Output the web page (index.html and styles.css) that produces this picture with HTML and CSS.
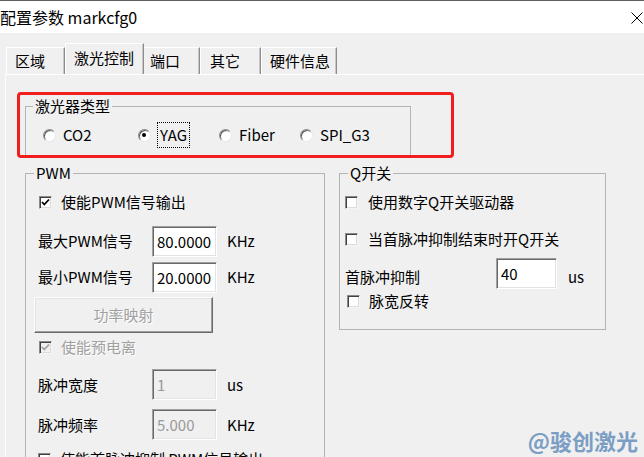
FILE: index.html
```html
<!DOCTYPE html>
<html lang="zh-CN">
<head>
<meta charset="utf-8">
<title>配置参数 markcfg0</title>
<link rel="stylesheet" href="styles.css">
</head>
<body>
<div class="titlebar">
  <span class="title">配置参数 markcfg0</span>
  <svg class="close" width="12" height="12" viewBox="0 0 12 12"><path d="M0.5 0.5 L11.5 11.5 M11.5 0.5 L0.5 11.5" stroke="#000" stroke-width="1" fill="none"/></svg>
</div>
<div class="dialog">
  <div class="tabstrip">
    <div class="tab tab-area">区域</div>
    <div class="tab tab-active">激光控制</div>
    <div class="tab tab-port">端口</div>
    <div class="tab tab-other">其它</div>
    <div class="tab tab-hw">硬件信息</div>
  </div>
  <div class="panel">
    <fieldset class="group group-laser">
      <legend class="legend legend-laser">激光器类型</legend>
      <div class="radios">
        <label class="radio-item radio-co2"><span class="radio"></span><span>CO2</span></label>
        <label class="radio-item"><span class="radio checked"></span><span class="focus">YAG</span></label>
        <label class="radio-item"><span class="radio"></span><span>Fiber</span></label>
        <label class="radio-item"><span class="radio"></span><span>SPI_G3</span></label>
      </div>
    </fieldset>
    <div class="groups">
      <fieldset class="group group-pwm">
        <legend class="legend">PWM</legend>
        <div class="pwm-body">
          <label class="check-row row-first"><span class="cb"><svg width="11" height="11" viewBox="0 0 11 11"><path d="M2 5 L4.3 7.5 L9 2.5" stroke="#000" stroke-width="1.8" fill="none"/></svg></span><span>使能PWM信号输出</span></label>
          <div class="field-row"><span class="flabel">最大PWM信号</span><input class="edit" type="text" value="80.0000"><span class="unit">KHz</span></div>
          <div class="field-row"><span class="flabel">最小PWM信号</span><input class="edit" type="text" value="20.0000"><span class="unit">KHz</span></div>
          <button class="btn" disabled>功率映射</button>
          <label class="check-row row-preion disabled"><span class="cb cb-disabled"><svg width="11" height="11" viewBox="0 0 11 11"><path d="M2 5 L4.3 7.5 L9 2.5" stroke="#a0a0a0" stroke-width="1.8" fill="none"/></svg></span><span class="dis-text">使能预电离</span></label>
          <div class="field-row field-row-31 row-width"><span class="flabel">脉冲宽度</span><input class="edit" type="text" value="1" disabled><span class="unit">us</span></div>
          <div class="field-row field-row-31 row-freq"><span class="flabel">脉冲频率</span><input class="edit" type="text" value="5.000" disabled><span class="unit">KHz</span></div>
          <label class="check-row row-last"><span class="cb"></span><span>使能首脉冲抑制 PWM信号输出</span></label>
        </div>
      </fieldset>
      <fieldset class="group group-q">
        <legend class="legend">Q开关</legend>
        <div class="q-body">
          <label class="check-row q-r1"><span class="cb"></span><span>使用数字Q开关驱动器</span></label>
          <label class="check-row q-r2"><span class="cb"></span><span>当首脉冲抑制结束时开Q开关</span></label>
          <div class="field-row field-row-31 q-r3"><span class="flabel qlabel">首脉冲抑制</span><input class="edit edit-q" type="text" value="40"><span class="unit qunit">us</span></div>
          <label class="check-row q-r4"><span class="cb"></span><span>脉宽反转</span></label>
        </div>
      </fieldset>
    </div>
  </div>
</div>
<div class="annotation"></div>
<div class="watermark">@骏创激光</div>
</body>
</html>
```
FILE: styles.css
```css
* { box-sizing: border-box; }

body {
  margin: 0;
  width: 644px;
  height: 457px;
  overflow: hidden;
  position: relative;
  background: #f0f0f0;
  color: #000;
  font-family: "Noto Sans CJK SC", "Noto Sans", sans-serif;
  font-size: 15px;
  line-height: 18px;
}

.titlebar {
  height: 33px;
  background: #fff;
  border-top: 1px solid #5f5f5f;
  display: flex;
  align-items: center;
  justify-content: space-between;
}

.title {
  font-size: 16px;
  line-height: 20px;
}

.close {
  margin-right: 1px;
  margin-top: 1px;
}

.dialog {
  padding-top: 10px;
}

.tabstrip {
  display: flex;
  align-items: flex-end;
  height: 31px;
  padding-left: 6px;
}

.tab {
  height: 27px;
  display: flex;
  align-items: center;
  padding-left: 8px;
  border-top: 1px solid #fff;
  border-left: 1px solid #fff;
  border-right: 1px solid #8c8c8c;
  box-shadow: inset -1px 0 0 #c8c8c8;
  white-space: nowrap;
}

.tab-area { width: 59px; }
.tab-active { width: 79px; height: 31px; padding-bottom: 2px; }
.tab-port { width: 56px; padding-left: 5px; border-left-color: #f0f0f0; }
.tab-other { width: 61px; padding-left: 9px; }
.tab-hw { width: 76px; }

.panel {
  margin-left: 5px;
  border-top: 1px solid #fff;
  border-left: 1px solid #fff;
  padding: 23px 0 0 19px;
}

.group {
  margin: 0;
  padding: 0;
  border: 1px solid #b4b4b4;
  min-inline-size: 0;
}

.legend {
  padding: 0 2px;
  margin-left: 8px;
  line-height: 16px;
}

.legend-laser { margin-left: 7px; }

.group-laser { width: 386px; }

.radios {
  display: flex;
  align-items: center;
  height: 22px;
  margin: 10px 0 10px 17px;
}

.radio-item {
  display: flex;
  align-items: center;
  gap: 7px;
  width: 81px;
}

.radio-co2 { width: 95px; }

.radio {
  width: 13px;
  height: 13px;
  border-radius: 50%;
  background: #fff;
  border: 1px solid;
  border-color: #8a8a8a #e8e8e8 #e8e8e8 #8a8a8a;
  box-shadow: inset 1px 1px 0 #5a5a5a;
  position: relative;
  flex: none;
}

.radio.checked::after {
  content: "";
  position: absolute;
  left: 3px;
  top: 3px;
  width: 4px;
  height: 4px;
  border-radius: 50%;
  background: #000;
}

.focus {
  outline: 1px dotted #000;
  padding: 3px 2px;
}

.groups {
  display: flex;
  gap: 14px;
  margin-top: 8px;
  align-items: flex-start;
}

.group-pwm { width: 300px; }
.group-q { width: 267px; }

.pwm-body { padding-left: 12px; }
.q-body { padding: 0 0 17px 5px; }

.check-row {
  display: flex;
  align-items: center;
  gap: 9px;
  height: 22px;
  white-space: nowrap;
}

.cb {
  width: 13px;
  height: 13px;
  flex: none;
  background: #fff;
  border: 1px solid;
  border-color: #8a8a8a #f4f4f4 #f4f4f4 #8a8a8a;
  box-shadow: inset 1px 1px 0 #404040, inset -1px -1px 0 #dcdcdc;
  display: flex;
  align-items: center;
  justify-content: center;
}

.cb-disabled {
  background: #f0f0f0;
}

.row-first { height: 42px; padding-left: 1px; }
.row-preion { height: 28px; padding-left: 1px; }
.row-last { margin-top: 8px; padding-left: 0; }

.dis-text {
  color: #a0a0a0;
  text-shadow: 1px 1px 0 #fff;
}

.field-row {
  display: flex;
  align-items: center;
  height: 36px;
  white-space: nowrap;
}

.field-row-31 { height: 31px; }
.row-width { margin-top: 8px; }
.row-freq { margin-top: 9px; }

.flabel { width: 114px; }

.edit {
  width: 65px;
  height: 31px;
  padding: 0 0 0 4px;
  margin: 0;
  font: inherit;
  color: #000;
  background: #fff;
  border: 1px solid;
  border-color: #a0a0a0 #fff #fff #a0a0a0;
  box-shadow: inset 1px 1px 0 #696969, inset -1px -1px 0 #e3e3e3;
  outline: none;
}

.edit-q { width: 61px; }

.edit:disabled {
  background: #f0f0f0;
  color: #9a9a9a;
}

.unit { margin-left: 10px; }

.btn {
  display: block;
  width: 179px;
  height: 36px;
  margin: 2px 0 0 -4px;
  padding: 0;
  font: inherit;
  color: #a0a0a0;
  text-shadow: 1px 1px 0 #fff;
  background: #f0f0f0;
  border: 1px solid;
  border-color: #fff #696969 #696969 #fff;
  box-shadow: inset -1px -1px 0 #a0a0a0, inset 1px 1px 0 #e3e3e3;
}

.q-r1 { margin-top: 10px; }
.q-r2 { margin-top: 15px; gap: 10px; }
.q-r1 { gap: 10px; }
.q-r3 { margin-top: 8px; }
.qlabel { width: 151px; padding-top: 7px; }
.qunit { margin-left: 11px; padding-top: 7px; }
.q-r4 { margin-top: 1px; padding-left: 2px; }

.annotation {
  position: absolute;
  left: 17px;
  top: 92px;
  width: 437px;
  height: 66px;
  border: 3px solid #f01e1e;
  border-radius: 4px;
}

.watermark {
  position: absolute;
  right: 6px;
  bottom: 4px;
  font-size: 22px;
  line-height: 26px;
  font-weight: bold;
  color: #7b9ec4;
}
```
